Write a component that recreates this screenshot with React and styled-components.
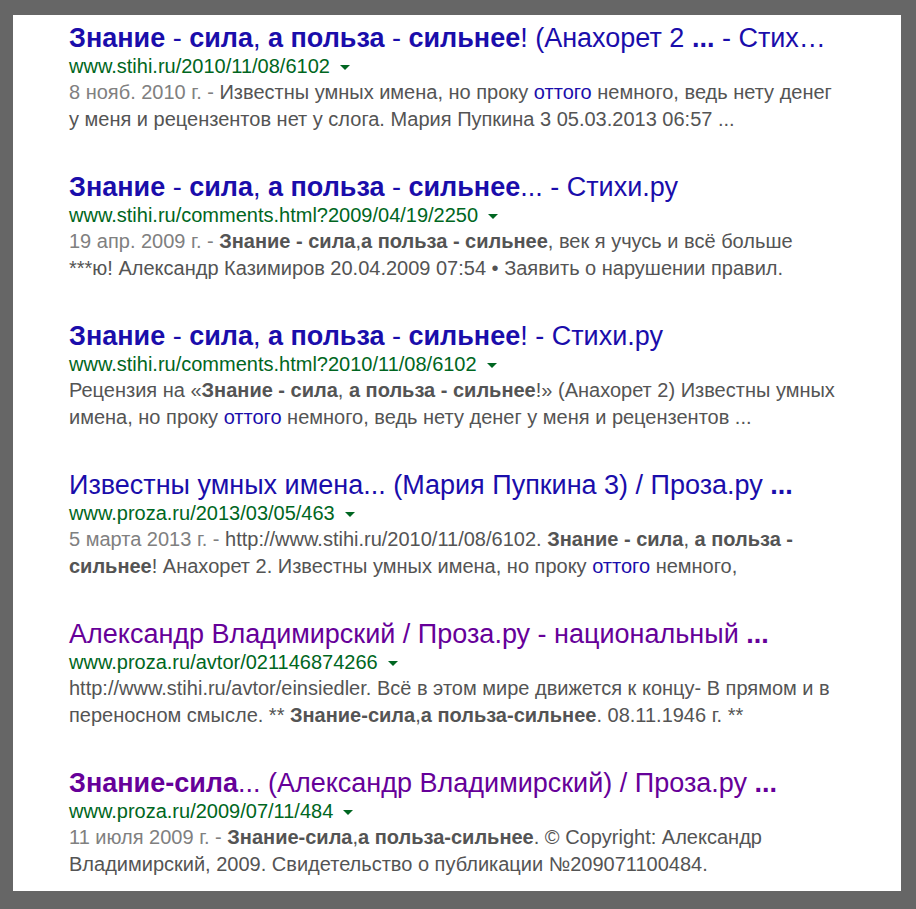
import styled, { createGlobalStyle } from "styled-components";

const GlobalStyle = createGlobalStyle`
  html, body {
    margin: 0;
    padding: 0;
    background: #666666;
  }
  body {
    font-family: "Liberation Sans", Arial, sans-serif;
  }
`;

const Frame = styled.div`
  width: 916px;
  height: 909px;
  padding: 15px 15px 0 13px;
  box-sizing: border-box;
`;

const Panel = styled.div`
  width: 888px;
  height: 876px;
  background: #ffffff;
  box-sizing: border-box;
  padding: 8px 0 0 56px;
  display: flex;
  flex-direction: column;
  gap: 39px;
`;

const Result = styled.div`
  display: flex;
  flex-direction: column;
`;

const Title = styled.a`
  font-size: 27px;
  line-height: 30px;
  color: ${(p) => (p.$visited ? "#660099" : "#1a0dab")};
  text-decoration: none;
  white-space: nowrap;
`;

const UrlRow = styled.div`
  display: flex;
  align-items: center;
  height: 26px;
`;

const Url = styled.cite`
  font-style: normal;
  font-size: 20px;
  line-height: 26px;
  color: #006621;
`;

const Arrow = styled.span`
  width: 0;
  height: 0;
  margin: 2px 0 0 10px;
  border-left: 5px solid transparent;
  border-right: 5px solid transparent;
  border-top: 5px solid #006621;
`;

const Snippet = styled.div`
  font-size: 20px;
  line-height: 27px;
  color: #545454;
  white-space: nowrap;
`;

const Date = styled.span`
  color: #808080;
`;

const InlineLink = styled.a`
  color: #1a0dab;
  text-decoration: none;
`;

const results = [
  {
    title: (
      <>
        <b>Знание</b> - <b>сила</b>, <b>а польза</b> - <b>сильнее</b>! (Анахорет 2{" "}
        <b>...</b> - Стих…
      </>
    ),
    url: "www.stihi.ru/2010/11/08/6102",
    snippet: (
      <>
        <Date>8 нояб. 2010 г. - </Date>Известны умных имена, но проку{" "}
        <InlineLink>оттого</InlineLink> немного, ведь нету денег
        <br />у меня и рецензентов нет у слога. Мария Пупкина 3 05.03.2013 06:57 ...
      </>
    ),
  },
  {
    title: (
      <>
        <b>Знание</b> - <b>сила</b>, <b>а польза</b> - <b>сильнее</b>... - Стихи.ру
      </>
    ),
    url: "www.stihi.ru/comments.html?2009/04/19/2250",
    snippet: (
      <>
        <Date>19 апр. 2009 г. - </Date>
        <b>Знание - сила</b>,<b>а польза - сильнее</b>, век я учусь и всё больше
        <br />
        ***ю! Александр Казимиров 20.04.2009 07:54 • Заявить о нарушении правил.
      </>
    ),
  },
  {
    title: (
      <>
        <b>Знание</b> - <b>сила</b>, <b>а польза</b> - <b>сильнее</b>! - Стихи.ру
      </>
    ),
    url: "www.stihi.ru/comments.html?2010/11/08/6102",
    snippet: (
      <>
        Рецензия на «<b>Знание - сила</b>, <b>а польза - сильнее</b>!» (Анахорет 2) Известны умных
        <br />
        имена, но проку <InlineLink>оттого</InlineLink> немного, ведь нету денег у меня и
        рецензентов ...
      </>
    ),
  },
  {
    title: (
      <>
        Известны умных имена... (Мария Пупкина 3) / Проза.ру <b>...</b>
      </>
    ),
    url: "www.proza.ru/2013/03/05/463",
    snippet: (
      <>
        <Date>5 марта 2013 г. - </Date>http://www.stihi.ru/2010/11/08/6102. <b>Знание - сила</b>,{" "}
        <b>а польза -</b>
        <br />
        <b>сильнее</b>! Анахорет 2. Известны умных имена, но проку{" "}
        <InlineLink>оттого</InlineLink> немного,
      </>
    ),
  },
  {
    visited: true,
    title: (
      <>
        Александр Владимирский / Проза.ру - национальный <b>...</b>
      </>
    ),
    url: "www.proza.ru/avtor/021146874266",
    snippet: (
      <>
        http://www.stihi.ru/avtor/einsiedler. Всё в этом мире движется к концу- В прямом и в
        <br />
        переносном смысле. ** <b>Знание-сила</b>,<b>а польза-сильнее</b>. 08.11.1946 г. **
      </>
    ),
  },
  {
    visited: true,
    title: (
      <>
        <b>Знание-сила</b>... (Александр Владимирский) / Проза.ру <b>...</b>
      </>
    ),
    url: "www.proza.ru/2009/07/11/484",
    snippet: (
      <>
        <Date>11 июля 2009 г. - </Date>
        <b>Знание-сила</b>,<b>а польза-сильнее</b>. © Copyright: Александр
        <br />
        Владимирский, 2009. Свидетельство о публикации №209071100484.
      </>
    ),
  },
];

const App = () => {
  return (
    <Frame>
      <GlobalStyle />
      <Panel>
        {results.map((r, i) => (
          <Result key={i}>
            <Title $visited={r.visited}>{r.title}</Title>
            <UrlRow>
              <Url>{r.url}</Url>
              <Arrow />
            </UrlRow>
            <Snippet>{r.snippet}</Snippet>
          </Result>
        ))}
      </Panel>
    </Frame>
  );
};

export default App;
